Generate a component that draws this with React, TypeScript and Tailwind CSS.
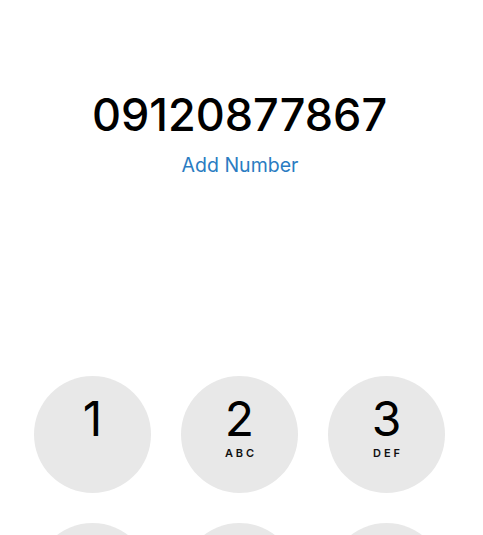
import React from 'react';

const keys: { digit: string; letters?: string }[] = [
  { digit: '1' },
  { digit: '2', letters: 'ABC' },
  { digit: '3', letters: 'DEF' },
  { digit: '4', letters: 'GHI' },
  { digit: '5', letters: 'JKL' },
  { digit: '6', letters: 'MNO' },
  { digit: '7', letters: 'PQRS' },
  { digit: '8', letters: 'TUV' },
  { digit: '9', letters: 'WXYZ' },
  { digit: '*' },
  { digit: '0', letters: '+' },
  { digit: '#' },
];

const Key = ({ digit, letters }: { digit: string; letters?: string }) => (
  <button className="w-[117px] h-[117px] rounded-full bg-[#e8e8e8] flex flex-col items-center pt-[19px]">
    <span className="text-[48px] leading-[48px] text-black">{digit}</span>
    {letters && (
      <span className="mt-[5px] text-[11px] leading-[11px] font-semibold tracking-[0.26em] pl-[0.26em] text-[#111]">
        {letters}
      </span>
    )}
  </button>
);

export default function App() {
  return (
    <div
      className="w-full min-h-screen bg-white flex flex-col items-center"
      style={{ fontFamily: 'Inter, "Noto Sans", sans-serif' }}
    >
      {/* Number display */}
      <div className="mt-[93px] mr-[4px] text-[45px] leading-[44px] font-medium text-black">09120877867</div>
      <button className="mt-[19px] mr-[3px] text-[19.5px] leading-[19px] text-[#2a7cc2]">Add Number</button>

      {/* Keypad */}
      <div className="mt-[201px] shrink-0 self-start ml-[34px] grid grid-cols-3 gap-x-[30px] gap-y-[30px]">
        {keys.map((k) => (
          <Key key={k.digit} digit={k.digit} letters={k.letters} />
        ))}
      </div>
    </div>
  );
}
